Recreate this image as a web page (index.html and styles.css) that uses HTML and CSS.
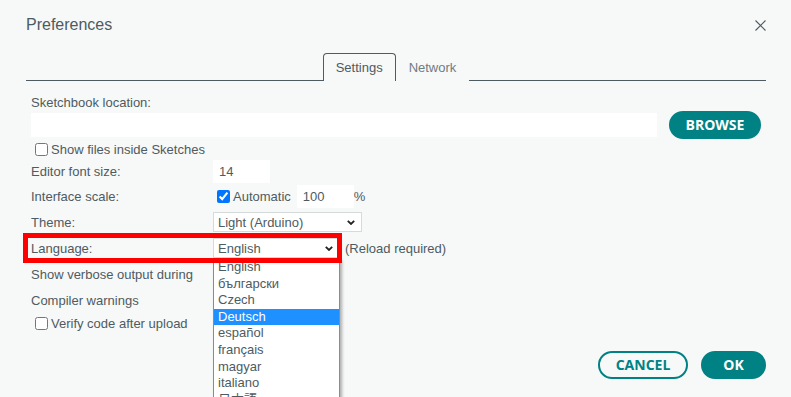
FILE: index.html
```html
<!DOCTYPE html>
<html lang="en">
<head>
<meta charset="utf-8">
<title>Preferences</title>
<link rel="stylesheet" href="styles.css">
</head>
<body>
<div class="dialog">
  <header class="head">
    <h1 class="title">Preferences</h1>
    <button class="close" aria-label="Close">
      <svg width="11" height="11" viewBox="0 0 11 11"><path d="M0.5 0.5 L10.5 10.5 M10.5 0.5 L0.5 10.5" stroke="#4e5b61" stroke-width="1.1" fill="none"/></svg>
    </button>
  </header>
  <nav class="tabs">
    <div class="tab active">Settings</div>
    <div class="tab">Network</div>
  </nav>
  <div class="content">
    <div class="loc-label">Sketchbook location:</div>
    <div class="path-row">
      <input class="text-input path" type="text" value="">
      <button class="btn browse">BROWSE</button>
    </div>
    <label class="check-row"><input type="checkbox" class="cb">Show files inside Sketches</label>
    <div class="row first">
      <div class="lbl">Editor font size:</div>
      <div class="ctl"><input class="text-input small" type="text" value="14"></div>
    </div>
    <div class="row">
      <div class="lbl">Interface scale:</div>
      <div class="ctl">
        <input type="checkbox" class="cb" checked><span>Automatic</span>
        <input class="text-input small scale" type="text" value="100"><span>%</span>
      </div>
    </div>
    <div class="row">
      <div class="lbl">Theme:</div>
      <div class="ctl">
        <div class="select theme"><span>Light (Arduino)</span><svg class="chev" width="8" height="5" viewBox="0 0 8 5"><polyline points="0.8,0.8 4,4 7.2,0.8" fill="none" stroke="#222" stroke-width="1.8"/></svg></div>
      </div>
    </div>
    <div class="row lang-row">
      <div class="lbl">Language:</div>
      <div class="ctl">
        <div class="select lang"><span>English</span><svg class="chev" width="8" height="5" viewBox="0 0 8 5"><polyline points="0.8,0.8 4,4 7.2,0.8" fill="none" stroke="#222" stroke-width="1.8"/></svg>
          <ul class="dropdown">
            <li>English</li>
            <li>български</li>
            <li>Czech</li>
            <li class="sel">Deutsch</li>
            <li>español</li>
            <li>français</li>
            <li>magyar</li>
            <li>italiano</li>
            <li class="cjk">日本語</li>
          </ul>
        </div>
        <span class="reload">(Reload required)</span>
      </div>
    </div>
    <div class="row">
      <div class="lbl">Show verbose output during</div>
    </div>
    <div class="row">
      <div class="lbl">Compiler warnings</div>
    </div>
    <label class="check-row"><input type="checkbox" class="cb">Verify code after upload</label>
  </div>
  <footer class="foot">
    <button class="btn cancel">CANCEL</button>
    <button class="btn ok">OK</button>
  </footer>
</div>
</body>
</html>
```
FILE: styles.css
```css
html, body {
  margin: 0;
  height: 397px;
  overflow: hidden;
}
body {
  background: #f7f8f8;
  font-family: "Liberation Sans", Arial, sans-serif;
  font-size: 13px;
  color: #4e5b61;
}
.dialog {
  padding: 15px 25px 0 26px;
}
.head {
  display: flex;
  justify-content: space-between;
  align-items: center;
  height: 20px;
}
.title {
  margin: 0;
  font-size: 16px;
  font-weight: normal;
  line-height: 20px;
  color: #4e5b61;
}
.close {
  display: block;
  width: 11px;
  height: 11px;
  padding: 0;
  border: 0;
  background: none;
}
.close svg { display: block; }
.tabs {
  margin-top: 18px;
  height: 27px;
  border-bottom: 1px solid #4e5b61;
  display: flex;
  justify-content: center;
  align-items: flex-start;
}
.tab {
  position: relative;
  box-sizing: border-box;
  height: 28px;
  padding: 1px 12px 0;
  line-height: 26px;
  border: 1px solid transparent;
  border-bottom: 0;
  border-radius: 4px 4px 0 0;
  background: #f7f8f8;
  color: #717c80;
}
.tab.active {
  border-color: #4e5b61;
  color: #4e5b61;
}
.content {
  padding: 14px 5px 0 5px;
}
.loc-label {
  line-height: 16px;
}
.path-row {
  display: flex;
  align-items: center;
  gap: 12px;
  height: 28px;
}
.text-input {
  box-sizing: border-box;
  border: 0;
  background: #fff;
  padding: 0 6px;
  font: inherit;
  color: inherit;
  outline: none;
  margin: 0;
}
.path {
  flex: 1;
  height: 24px;
  min-width: 0;
}
.small {
  width: 57px;
  height: 23px;
}
.scale {
  margin-left: 6px;
}
.btn {
  box-sizing: border-box;
  height: 28px;
  padding: 0;
  border: 2px solid #008184;
  border-radius: 14px;
  font-family: "Open Sans", "Liberation Sans", sans-serif;
  font-weight: 700;
  font-size: 14px;
  line-height: 24px;
  cursor: pointer;
}
.browse {
  width: 92px;
  background: #008184;
  color: #fff;
}
.check-row {
  display: flex;
  align-items: center;
  height: 20px;
}
.cb {
  width: 13px;
  height: 13px;
  margin: 3px 3px 3px 4px;
  flex: none;
}
.row {
  display: flex;
  align-items: center;
  height: 26px;
}
.row.first {
  height: 24px;
}
.lbl {
  width: 182px;
  flex: none;
  white-space: nowrap;
}
.ctl {
  display: flex;
  align-items: center;
}
.select {
  position: relative;
  box-sizing: border-box;
  height: 20px;
  border: 1px solid #d5dada;
  background: #fff;
  display: flex;
  align-items: center;
  justify-content: space-between;
  padding: 0 6px 0 4px;
}
.select.theme { width: 149px; }
.select.lang { width: 127px; }
.chev { display: block; flex: none; }
.reload { margin-left: 5px; }
.lang-row { position: relative; }
.lang-row::after {
  content: "";
  position: absolute;
  left: -8px;
  top: -2px;
  width: 319px;
  height: 30px;
  box-sizing: border-box;
  border: 5px solid #ff0000;
  z-index: 3;
  pointer-events: none;
}
.dropdown {
  position: absolute;
  left: -1px;
  top: 19px;
  width: 127px;
  box-sizing: border-box;
  margin: 0;
  padding: 0;
  list-style: none;
  background: #fff;
  border: 1px solid #8c8c8c;
  border-bottom: 0;
  box-shadow: 2px 2px 3px rgba(0, 0, 0, 0.3);
  z-index: 2;
}
.dropdown li {
  height: 16.6px;
  line-height: 16.6px;
  padding-left: 4px;
  white-space: nowrap;
  color: #4e5b61;
}
.dropdown li.sel {
  background: #1e90ff;
  color: #fff;
}
.dropdown li.cjk {
  font-family: "Liberation Sans", "Noto Sans CJK JP", sans-serif;
}
.foot {
  display: flex;
  justify-content: flex-end;
  gap: 13px;
  margin-top: 18px;
}
.cancel {
  width: 90px;
  background: transparent;
  color: #008184;
}
.ok {
  width: 65px;
  background: #008184;
  color: #fff;
}
```
